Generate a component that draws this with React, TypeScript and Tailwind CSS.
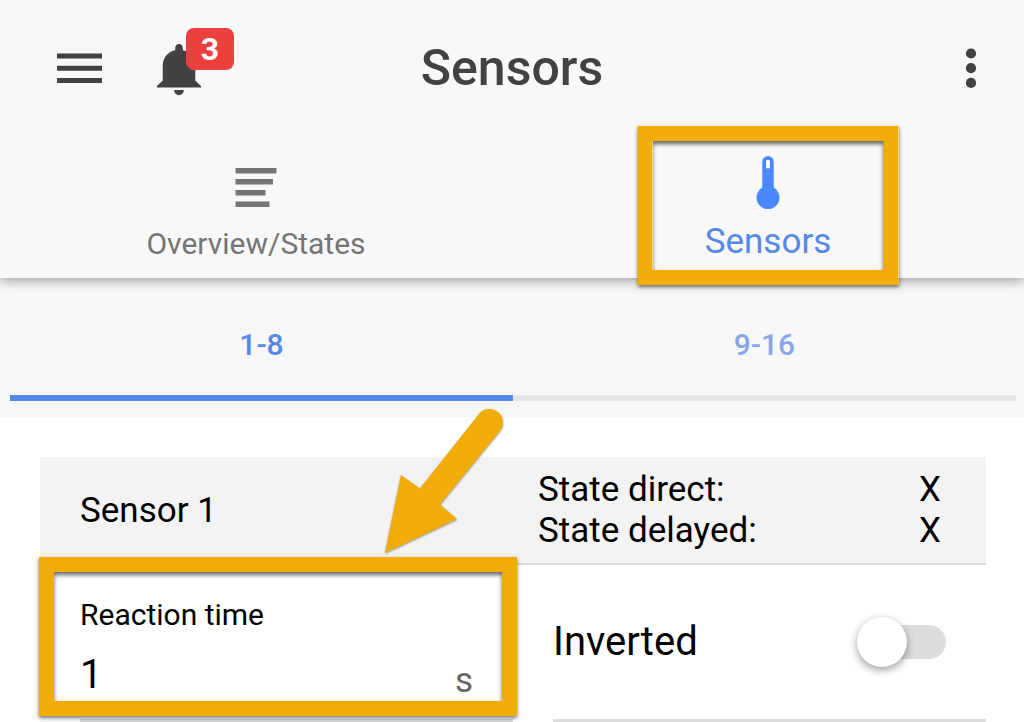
import { useState } from "react";
import clsx from "clsx";

const sensorPages = ["1-8", "9-16"];

const states = [
  { name: "State direct:", value: "X" },
  { name: "State delayed:", value: "X" },
];

const MenuIcon = () => (
  <svg width="46" height="30" viewBox="0 0 46 30" fill="currentColor">
    <path d="M0 .5h45v5H0zM0 12.800h45v5H0zM0 25h45v5H0z" />
  </svg>
);

const BellIcon = () => (
  <svg width="44" height="52" viewBox="0 0 44 52" fill="currentColor">
    <path d="M22 0c-2.400 0-3.800 1.900-3.800 4.200v2C10.500 8 5.700 14 5.700 22v14.500L0 42v1.500h44V42l-5.700-5.500V22c0-8-4.800-14-12.500-15.800v-2C25.800 1.900 24.400 0 22 0z" />
    <path d="M17 46h10c-.4 2.900-2.400 5.200-5 5.200S17.400 48.900 17 46z" />
  </svg>
);

const DotsIcon = () => (
  <svg width="12" height="42" viewBox="0 0 12 42" fill="currentColor">
    <circle cx="6" cy="6.500" r="5.100" />
    <circle cx="6" cy="21.200" r="5.100" />
    <circle cx="6" cy="35.900" r="5.100" />
  </svg>
);

const ListIcon = () => (
  <svg width="42" height="40" viewBox="0 0 42 40" fill="currentColor">
    <path d="M.5 0h41v5.500H.5zM.5 11h37.500v5.500H.5zM.5 22h30v5.500H.5zM.5 33.500h34V39H.5z" />
  </svg>
);

const ThermometerIcon = () => (
  <svg width="24" height="53" viewBox="0 0 24 53" fill="currentColor">
    <path
      fillRule="evenodd"
      d="M12 0a5.700 5.700 0 0 0-5.700 5.700v25.900a11.500 11.500 0 1 0 11.400 0V5.700A5.700 5.700 0 0 0 12 0zM12 3.800a2 2 0 0 1 2 2v6.400h-4V5.800a2 2 0 0 1 2-2z"
    />
  </svg>
);

const Highlight = ({ className }: { className: string }) => (
  <div
    className={clsx(
      "pointer-events-none absolute border-[15px] border-[#f2ac0a] shadow-[0_2px_4px_rgba(0,0,0,0.55),inset_0_3px_4px_rgba(0,0,0,0.6)]",
      className,
    )}
  />
);

const Arrow = () => (
  <svg
    className="pointer-events-none absolute -top-[160px] left-[340px] drop-shadow-[0_1px_1px_rgba(0,0,0,0.4)]"
    width="128"
    height="152"
    viewBox="0 0 128 152"
    fill="#f2ac0a"
  >
    <path d="M5 148L21 70l19 13.500L99 9a13.500 13.500 0 0 1 21 17L60 99.500 77 114z" />
  </svg>
);

const App = () => {
  const [page, setPage] = useState("1-8");
  const [reactionTime, setReactionTime] = useState("1");
  const [inverted, setInverted] = useState(false);

  return (
    <div className="min-h-screen w-full overflow-hidden bg-white font-[Roboto,sans-serif] text-black">
      <header className="relative z-10 bg-[#f8f8f8] shadow-[0_2px_12px_rgba(0,0,0,0.4)]">
        <div className="grid h-[136px] grid-cols-[1fr_auto_1fr] items-center px-[47px] text-[#424242]">
          <div className="flex items-center gap-[54px] pl-[10px]">
            <button type="button" aria-label="Menu">
              <MenuIcon />
            </button>
            <button
              type="button"
              aria-label="Notifications"
              className="relative mt-1"
            >
              <BellIcon />
              <span className="absolute -top-4 left-[29px] flex h-[42px] w-12 items-center justify-center rounded-lg bg-[#ec403f] text-[32px] leading-8 font-bold text-white">
                3
              </span>
            </button>
          </div>
          <h1 className="text-[50px] font-medium">Sensors</h1>
          <button type="button" aria-label="More" className="justify-self-end">
            <DotsIcon />
          </button>
        </div>

        <nav className="grid h-[142px] grid-cols-2">
          <a
            href="#overview"
            className="flex flex-col items-center justify-end pb-4 text-[30px] leading-9 text-[#757575]"
          >
            <ListIcon />
            <span className="mt-[18px]">Overview/States</span>
          </a>
          <a
            href="#sensors"
            className="relative flex flex-col items-center justify-end pb-4 text-[35px] leading-10 text-[#5588e8]"
          >
            <span className="text-[#4a88fd]">
              <ThermometerIcon />
            </span>
            <span className="mt-[13px] leading-10">Sensors</span>
            <Highlight className="-top-[10px] left-1/2 h-[159px] w-[261px] -translate-x-1/2" />
          </a>
        </nav>
      </header>

      <main>
        <div className="grid grid-cols-2 bg-[#f7f7f7] pr-2 pb-4 pl-[10px]">
          {sensorPages.map((name) => (
            <button
              key={name}
              type="button"
              onClick={() => setPage(name)}
              className={clsx(
                "border-b-[6px] pt-[50px] pb-[33px] text-[30px] leading-[34px] font-medium",
                page === name
                  ? "border-[#5588e8] text-[#5588e8]"
                  : "border-[#e6e6e6] text-[#86a8ea]",
              )}
            >
              {name}
            </button>
          ))}
        </div>

        <section className="pt-10 pr-[38px] pl-10">
          <div className="grid grid-cols-2 items-center border-b-2 border-[#dddddd] bg-[#f3f3f3] py-3 text-[35px] leading-[41px]">
            <h2 className="pl-10">Sensor 1</h2>
            <dl className="pr-[45px] pl-[25px]">
              {states.map(({ name, value }) => (
                <div key={name} className="flex justify-between">
                  <dt>{name}</dt>
                  <dd>{value}</dd>
                </div>
              ))}
            </dl>
          </div>

          <div className="relative grid grid-cols-2">
            <div className="pl-10">
              <div className="flex h-[157px] flex-col border-b-[3px] border-[#dddddd] pt-8 pr-10">
                <label htmlFor="reactionTime" className="text-[30px] leading-9">
                  Reaction time
                </label>
                <div className="mt-[18px] flex items-center justify-between">
                  <input
                    id="reactionTime"
                    type="text"
                    inputMode="numeric"
                    value={reactionTime}
                    onChange={(event) => setReactionTime(event.target.value)}
                    className="w-full min-w-0 bg-transparent text-[40px] leading-12 outline-none"
                  />
                  <span className="pt-3 text-[35px] leading-9 text-[#666666]">
                    s
                  </span>
                </div>
              </div>
            </div>

            <div className="pl-10">
              <div className="flex h-[157px] items-center justify-between border-b-[3px] border-[#dddddd] pr-10">
                <label htmlFor="inverted" className="text-[40px]">
                  Inverted
                </label>
                <input
                  id="inverted"
                  type="checkbox"
                  role="switch"
                  checked={inverted}
                  onChange={(event) => setInverted(event.target.checked)}
                  className="relative h-[34px] w-[84px] appearance-none rounded-full bg-[#dddddd] before:absolute before:-top-2 before:-left-[5px] before:size-[50px] before:rounded-full before:bg-white before:shadow-[0_3px_8px_rgba(0,0,0,0.4)] checked:bg-[#5588e8] checked:before:left-[39px]"
                />
              </div>
            </div>

            <Highlight className="-top-2 -left-px h-[159px] w-[478px]" />
            <Arrow />
          </div>
        </section>
      </main>
    </div>
  );
};

export default App;
